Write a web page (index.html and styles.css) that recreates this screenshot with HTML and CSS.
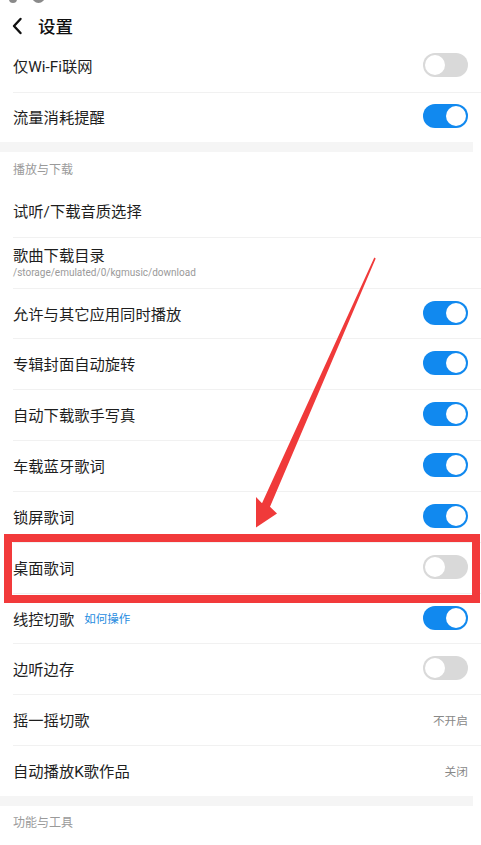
FILE: index.html
```html
<!DOCTYPE html>
<html>
<head>
  <title>设置</title>
  <meta http-equiv="Content-Type" content="text/html;charset=utf-8" />
  <meta name="viewport" content="width=device-width">
  <link rel="stylesheet" href="styles.css">
</head>
<body>
  <div class="status">
    <span class="dot"></span>
    <span class="dot big"></span>
  </div>
  <div class="topbar">
    <svg class="back" width="12" height="18" viewBox="0 0 12 18">
      <path d="M9.5 2 L3 9 L9.5 16" fill="none" stroke="#111" stroke-width="2.4" stroke-linecap="round" stroke-linejoin="round"/>
    </svg>
    <span class="title">设置</span>
  </div>

  <div class="group top">
    <div class="row"><span class="label">仅Wi-Fi联网</span><span class="switch"><i></i></span></div>
    <div class="row"><span class="label">流量消耗提醒</span><span class="switch on"><i></i></span></div>
  </div>

  <div class="band"></div>
  <div class="group-title">播放与下载</div>
  <div class="group">
    <div class="row"><span class="label">试听/下载音质选择</span></div>
    <div class="row">
      <div class="stack">
        <span class="label">歌曲下载目录</span>
        <span class="path">/storage/emulated/0/kgmusic/download</span>
      </div>
    </div>
    <div class="row"><span class="label">允许与其它应用同时播放</span><span class="switch on"><i></i></span></div>
    <div class="row"><span class="label">专辑封面自动旋转</span><span class="switch on"><i></i></span></div>
    <div class="row"><span class="label">自动下载歌手写真</span><span class="switch on"><i></i></span></div>
    <div class="row"><span class="label">车载蓝牙歌词</span><span class="switch on"><i></i></span></div>
    <div class="row"><span class="label">锁屏歌词</span><span class="switch on"><i></i></span></div>
    <div class="row"><span class="label">桌面歌词</span><span class="switch"><i></i></span></div>
    <div class="row"><span class="label">线控切歌<a class="help">如何操作</a></span><span class="switch on"><i></i></span></div>
    <div class="row"><span class="label">边听边存</span><span class="switch"><i></i></span></div>
    <div class="row"><span class="label">摇一摇切歌</span><span class="value">不开启</span></div>
    <div class="row"><span class="label">自动播放K歌作品</span><span class="value">关闭</span></div>
  </div>
  <div class="band"></div>
  <div class="group-title">功能与工具</div>

  <div class="mark"></div>
  <svg class="arrow" width="481" height="845" viewBox="0 0 481 845">
    <polygon fill="#f03a3a" points="374.3,257.6 375.7,258.4 270,506.8 277,513.5 256,527.5 256,497 262,503.2"/>
  </svg>
</body>
</html>
```

FILE: styles.css
```css
body {
  margin: 0;
  background: #fff;
  font-family: Roboto, "Noto Sans CJK SC", sans-serif;
  color: #1e1e1e;
  position: relative;
  height: 845px;
  overflow: hidden;
}
.status {
  height: 4px;
  overflow: hidden;
  display: flex;
  gap: 15px;
  padding-left: 9px;
}
.status .dot {
  display: block;
  width: 8px;
  height: 8px;
  margin-top: -5px;
  border-radius: 50%;
  background: #8a8a8a;
}
.status .dot.big {
  width: 13px;
  height: 13px;
  margin-top: -10px;
}
.topbar {
  height: 37px;
  display: flex;
  align-items: center;
  padding: 6px 0 0 11px;
  box-sizing: border-box;
}
.back { display: block; }
.title {
  margin-left: 15px;
  font-size: 17.5px;
  font-weight: 500;
  color: #111;
}
.group.top .row { height: 50.5px; }
.row {
  height: 50.83px;
  box-sizing: border-box;
  margin-left: 13px;
  padding: 0 13px 2px 0;
  border-top: 1px solid #f1f1f1;
  display: flex;
  align-items: center;
  justify-content: space-between;
}
.row:first-child { border-top: 0; }
.label {
  font-size: 15.3px;
  display: flex;
  align-items: center;
}
.stack {
  display: flex;
  flex-direction: column;
  padding-top: 1px;
}
.stack .label { line-height: 20px; }
.path {
  font-size: 10px;
  color: #9a9a9a;
  font-family: Roboto, sans-serif;
  line-height: 13px;
}
.help {
  font-size: 11.5px;
  color: #1f8ce0;
  margin-left: 10px;
}
.value {
  font-size: 11.7px;
  color: #888;
}
.switch {
  width: 45px;
  height: 24px;
  border-radius: 12px;
  background: #d9d9d9;
  box-sizing: border-box;
  padding: 2px;
  display: flex;
  align-items: center;
}
.switch i {
  display: block;
  width: 20px;
  height: 20px;
  border-radius: 50%;
  background: #fff;
}
.switch.on {
  background: #1189ef;
  justify-content: flex-end;
}
.band {
  height: 10px;
  margin-right: 8px;
  background: #f5f5f5;
}
.group-title {
  height: 34px;
  display: flex;
  align-items: center;
  padding: 0 0 2px 13px;
  box-sizing: border-box;
  font-size: 12px;
  color: #9a9a9a;
}
.mark {
  position: absolute;
  left: 4px;
  top: 534px;
  width: 476px;
  height: 69px;
  box-sizing: border-box;
  border: 8px solid #f23a3b;
}
.arrow {
  position: absolute;
  left: 0;
  top: 0;
}
```
